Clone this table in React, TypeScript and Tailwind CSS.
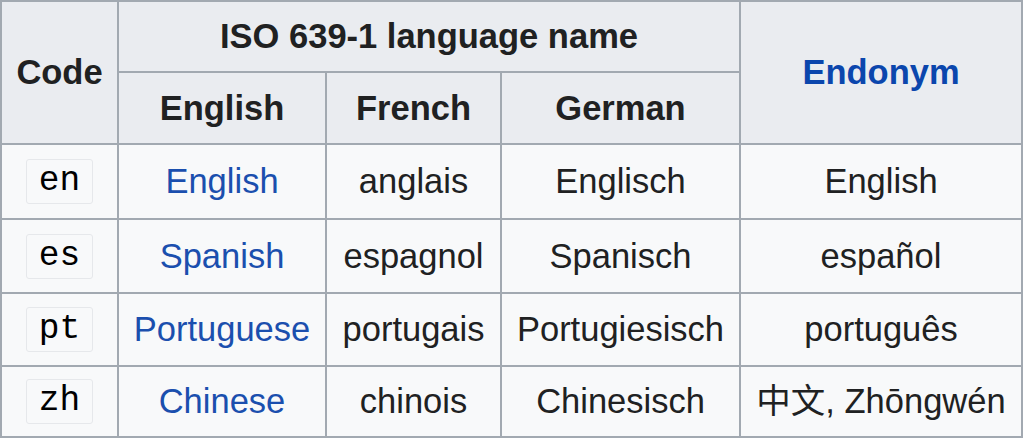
const rows = [
  { code: "en", en: "English", fr: "anglais", de: "Englisch", endo: "English" },
  { code: "es", en: "Spanish", fr: "espagnol", de: "Spanisch", endo: "español" },
  { code: "pt", en: "Portuguese", fr: "portugais", de: "Portugiesisch", endo: "português" },
  { code: "zh", en: "Chinese", fr: "chinois", de: "Chinesisch", endo: "中文, Zhōngwén" },
];

const head = "flex items-center justify-center bg-[#eaecf0] font-bold";
const cell = "flex items-center justify-center bg-[#f8f9fa] whitespace-nowrap";
const dark = "text-[#202122]";
const link = "text-[#1b4fae]";

export default function App() {
  return (
    <div className="w-[1024px] h-[439px] bg-white font-['Liberation_Sans','Noto_Sans_CJK_SC',sans-serif] text-[34.5px] leading-none">
      <div className="grid w-[1023px] grid-cols-[115px_206px_173px_237px_280px] grid-rows-[69px_70px_73px_72px_71px_69px] gap-[2px] border-2 border-[#a2a9b1] bg-[#a2a9b1]">
        <div className={`${head} ${dark} row-span-2`}>Code</div>
        <div className={`${head} ${dark} col-span-3`}>ISO 639-1 language name</div>
        <div className={`${head} row-span-2 text-[#0b46ad]`}>Endonym</div>
        <div className={`${head} ${dark}`}>English</div>
        <div className={`${head} ${dark}`}>French</div>
        <div className={`${head} ${dark}`}>German</div>

        {rows.map((r) => (
          <div key={r.code} className="contents">
            <div className={cell}>
              <span className="flex h-[45px] items-center rounded-[3px] border border-[#e6e8eb] bg-[#f8f9fa] px-[12px] font-['Liberation_Mono',monospace] text-black">
                {r.code}
              </span>
            </div>
            <div className={`${cell} ${link}`}>{r.en}</div>
            <div className={`${cell} ${dark}`}>{r.fr}</div>
            <div className={`${cell} ${dark}`}>{r.de}</div>
            <div className={`${cell} ${dark}`}>{r.endo}</div>
          </div>
        ))}
      </div>
    </div>
  );
}
